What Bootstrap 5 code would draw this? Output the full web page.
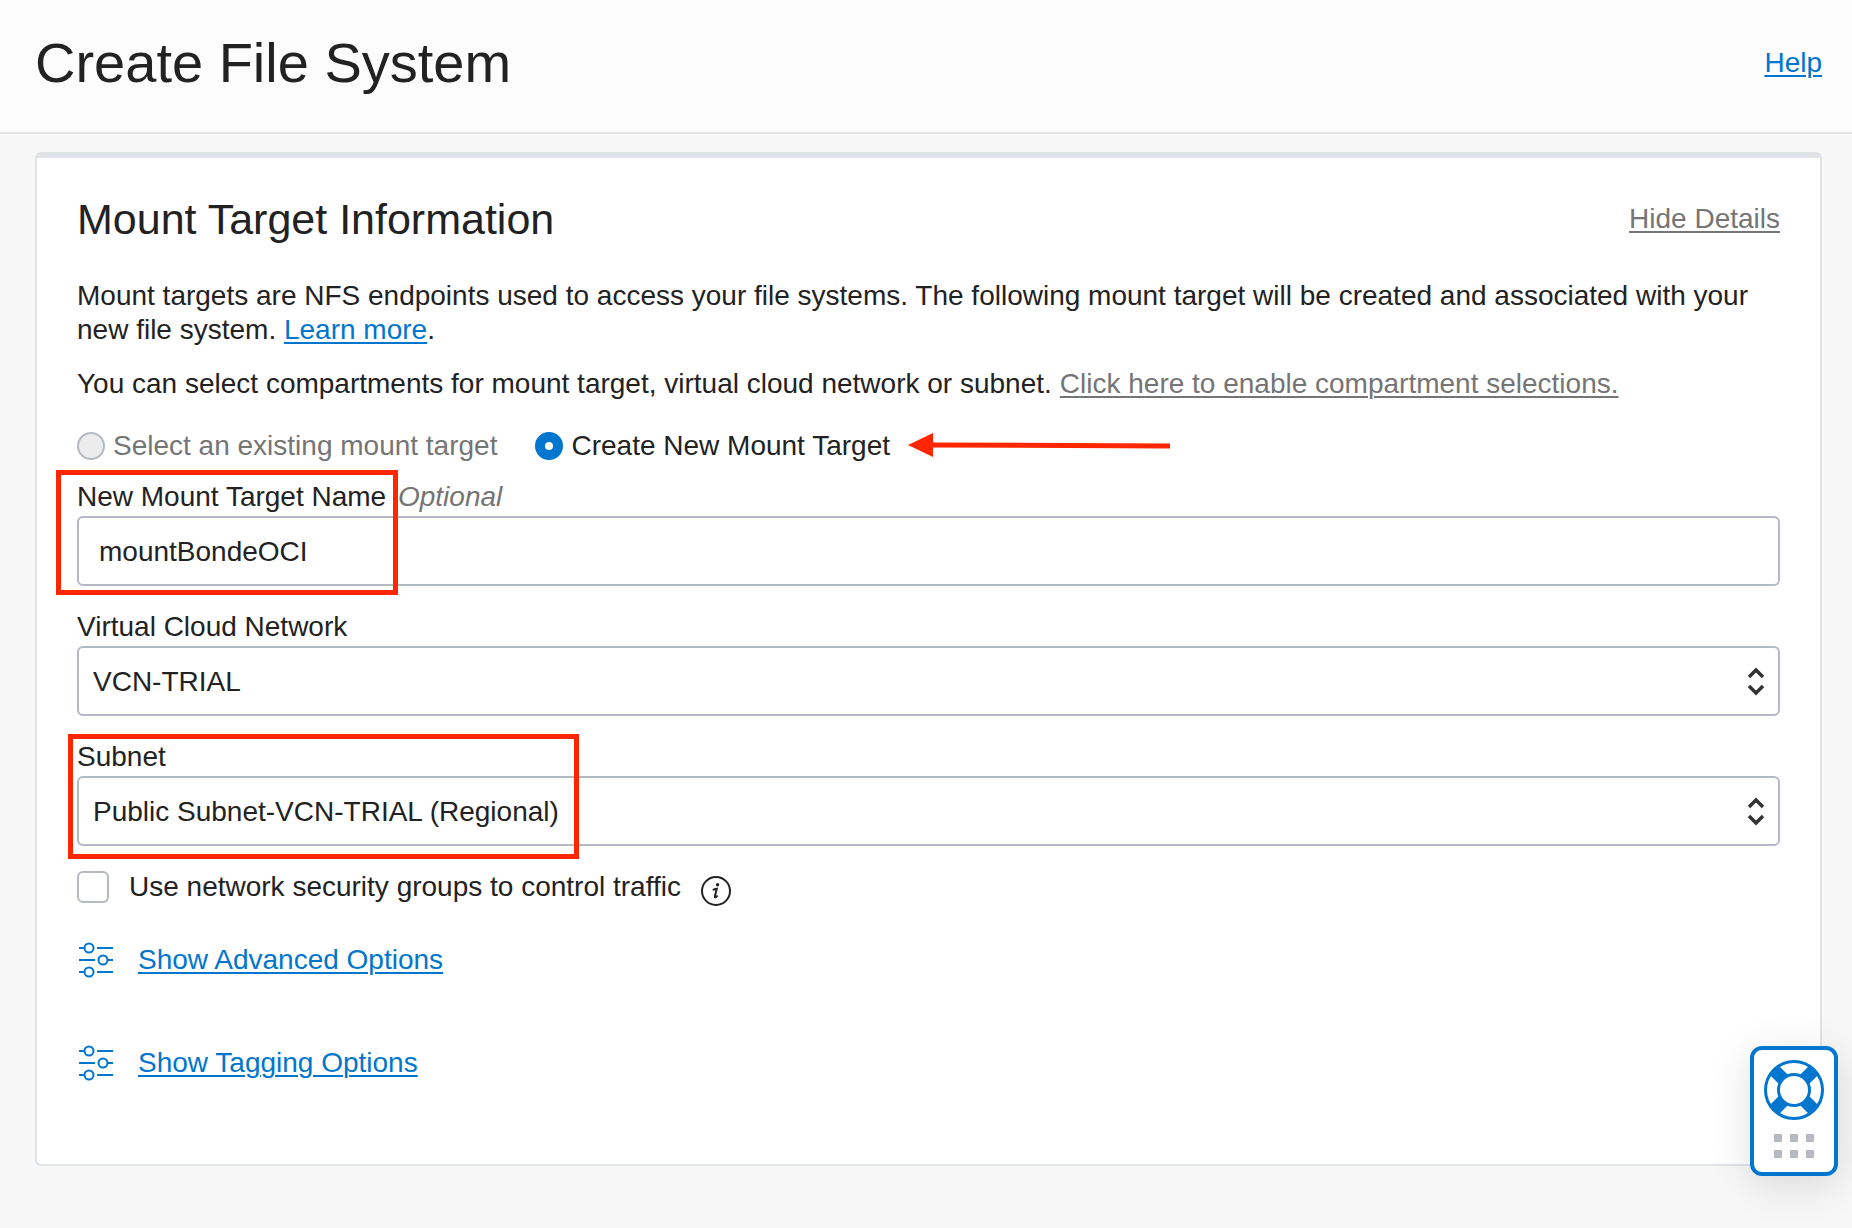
<!DOCTYPE html>
<html lang="en">
<head>
<meta charset="utf-8">
<meta name="viewport" content="width=device-width, initial-scale=1">
<title>Create File System</title>
<link href="https://cdn.jsdelivr.net/npm/bootstrap@5.3.0/dist/css/bootstrap.min.css" rel="stylesheet">
<style>
  :root { --ink: #222; --muted: #757575; --link: #0076ce; --line: #dfe3e8; --field: #b4b9c2; --callout: #ff2600; }
  body { background: #f7f7f7; color: var(--ink); font-family: "Liberation Sans", Arial, sans-serif; font-size: 28px; line-height: 34px; min-height: 100vh; }
  a { color: var(--link); text-decoration-thickness: 2px; text-underline-offset: 3px; }
  a.quiet { color: var(--muted); }
  .page-head { background: #fcfcfc; border-bottom: 2px solid #e5e5e5; padding: 31px 30px 37px 35px; }
  .page-head h1 { font-size: 56px; line-height: 64px; font-weight: 400; }
  .page-main { padding: 18px 30px 62px 35px; }
  .panel { border: 2px solid var(--line); border-top-width: 6px; border-radius: 6px; --bs-card-bg: #fff; color: var(--ink); }
  .panel > .card-body { padding: 35px 40px 83px; }
  .panel h2 { font-size: 43px; line-height: 52px; font-weight: 400; }
  .panel-head { margin-bottom: 34px; }
  .panel p { margin-bottom: 20px; }
  .choices { gap: 38px; margin: 28px 0 17px; }
  .choice { gap: 8px; }
  .form-check-input.dot { width: 28px; height: 28px; border: 2px solid var(--field); background: #ececec; margin: 0; opacity: 1; }
  .form-check-input.dot:checked { border: 10px solid var(--link); background: #fff; }
  .form-check-input.box { width: 32px; height: 32px; border: 2px solid var(--field); border-radius: 6px; margin: 0; }
  .muted { color: var(--muted); }
  .field { margin-bottom: 24px; }
  .field label { display: inline-block; margin-bottom: 2px; }
  .field .form-control, .field .form-select { height: 70px; border: 2px solid var(--field); border-radius: 6px; font-size: 28px; line-height: 34px; color: var(--ink); background: #fff; padding: 2px 20px 0; }
  .field .form-select { padding: 2px 60px 0 14px; }
  .chevrons { right: 14px; top: 20px; pointer-events: none; }
  .options { gap: 25px; }
  .option-list { row-gap: 67px; }
  .checkline { height: 34px; margin-bottom: 38px; gap: 20px; }
  .callout-frame { border: 5px solid var(--callout); pointer-events: none; height: 125px; top: -10px; }
  .frame-name { left: -21px; width: 342px; }
  .frame-subnet { left: -9px; width: 511px; top: -6px; }
  .pointer { left: 100%; top: 4px; margin-left: 18px; }
  .help-dock { right: 14px; bottom: 52px; width: 88px; height: 130px; border: 4px solid var(--link); border-radius: 12px; background: #fff; padding: 0; box-shadow: 0 8px 40px rgba(0,0,0,.13); }
</style>
<script src="https://cdn.jsdelivr.net/npm/bootstrap@5.3.0/dist/js/bootstrap.bundle.min.js"></script>
</head>
<body>
<header class="page-head d-flex justify-content-between align-items-center">
  <h1 class="m-0">Create File System</h1>
  <a href="#">Help</a>
</header>

<main class="page-main">
  <section class="card panel">
    <div class="card-body">
      <div class="panel-head d-flex justify-content-between align-items-center">
        <h2 class="m-0">Mount Target Information</h2>
        <a href="#" class="quiet">Hide Details</a>
      </div>

      <p>Mount targets are NFS endpoints used to access your file systems. The following mount target will be created and associated with your new file system. <a href="#">Learn more</a>.</p>
      <div class="d-flex flex-wrap gap-2">
        <span>You can select compartments for mount target, virtual cloud network or subnet.</span>
        <a href="#" class="quiet">Click here to enable compartment selections.</a>
      </div>

      <div class="choices d-flex">
        <div class="choice d-flex align-items-center">
          <input class="form-check-input dot" type="radio" name="target" id="existing" disabled>
          <label class="muted" for="existing">Select an existing mount target</label>
        </div>
        <div class="choice d-flex align-items-center position-relative">
          <input class="form-check-input dot" type="radio" name="target" id="create" checked>
          <label for="create">Create New Mount Target</label>
          <svg class="pointer position-absolute" width="262" height="24" viewBox="0 0 262 24" aria-hidden="true"><path d="M0 12 25 0v24z" fill="#ff2600"/><path d="M22 12l240 1" stroke="#ff2600" stroke-width="5"/></svg>
        </div>
      </div>

      <div class="field position-relative">
        <label for="mt-name">New Mount Target Name</label>
        <em class="muted ms-1">Optional</em>
        <input class="form-control" id="mt-name" type="text" value="mountBondeOCI">
        <div class="callout-frame frame-name position-absolute"></div>
      </div>

      <div class="field">
        <label for="vcn">Virtual Cloud Network</label>
        <div class="position-relative">
          <select class="form-select" id="vcn"><option>VCN-TRIAL</option></select>
          <svg class="chevrons position-absolute" width="20" height="30" viewBox="0 0 20 30" fill="none" stroke="#333" stroke-width="3.5" aria-hidden="true"><path d="M3 11l7-7 7 7M3 20l7 7 7-7"/></svg>
        </div>
      </div>

      <div class="field position-relative">
        <label for="subnet">Subnet</label>
        <div class="position-relative">
          <select class="form-select" id="subnet"><option>Public Subnet-VCN-TRIAL (Regional)</option></select>
          <svg class="chevrons position-absolute" width="20" height="30" viewBox="0 0 20 30" fill="none" stroke="#333" stroke-width="3.5" aria-hidden="true"><path d="M3 11l7-7 7 7M3 20l7 7 7-7"/></svg>
        </div>
        <div class="callout-frame frame-subnet position-absolute"></div>
      </div>

      <div class="checkline d-flex align-items-center">
        <input class="form-check-input box" type="checkbox" id="nsg">
        <label for="nsg">Use network security groups to control traffic</label>
        <svg class="mt-2" width="30" height="30" viewBox="0 0 30 30" role="img" aria-label="Information"><circle cx="15" cy="15" r="14" fill="none" stroke="#222" stroke-width="2"/><circle cx="16.6" cy="8.8" r="1.7" fill="#222"/><path d="M11.800 14c1.200-.7 2.600-1.100 4-1.300l-1.900 7.600c-.4 1.800 1 1.300 2.700-.6" fill="none" stroke="#222" stroke-width="2"/></svg>
      </div>

      <div class="option-list d-flex flex-column">
        <div class="options d-flex align-items-center">
          <svg width="36" height="36" viewBox="0 0 36 36" fill="none" stroke="#0076ce" stroke-width="2" aria-hidden="true"><path d="M2 6h6M20 6h16M2 18h16M30 18h6M2 30h6M20 30h16"/><circle cx="12" cy="6" r="4.5"/><circle cx="26" cy="18" r="4.5"/><circle cx="12" cy="30" r="4.5"/></svg>
          <a href="#">Show Advanced Options</a>
        </div>
        <div class="options d-flex align-items-center">
          <svg width="36" height="36" viewBox="0 0 36 36" fill="none" stroke="#0076ce" stroke-width="2" aria-hidden="true"><path d="M2 6h6M20 6h16M2 18h16M30 18h6M2 30h6M20 30h16"/><circle cx="12" cy="6" r="4.5"/><circle cx="26" cy="18" r="4.5"/><circle cx="12" cy="30" r="4.5"/></svg>
          <a href="#">Show Tagging Options</a>
        </div>
      </div>
    </div>
  </section>
</main>

<button type="button" class="help-dock position-fixed" aria-label="Support">
  <svg class="d-block" width="80" height="122" viewBox="0 0 80 122" aria-hidden="true">
    <circle cx="40" cy="40" r="28.5" fill="#fff" stroke="#0076ce" stroke-width="3"/>
    <path d="M20 20l40 40M60 20L20 60" stroke="#0076ce" stroke-width="13"/>
    <circle cx="40" cy="40" r="15.5" fill="#fff" stroke="#0076ce" stroke-width="3"/>
    <path d="M20 84h8v8h-8zM36 84h8v8h-8zM52 84h8v8h-8zM20 100h8v8h-8zM36 100h8v8h-8zM52 100h8v8h-8z" fill="#b4b9c2"/>
  </svg>
</button>
</body>
</html>
